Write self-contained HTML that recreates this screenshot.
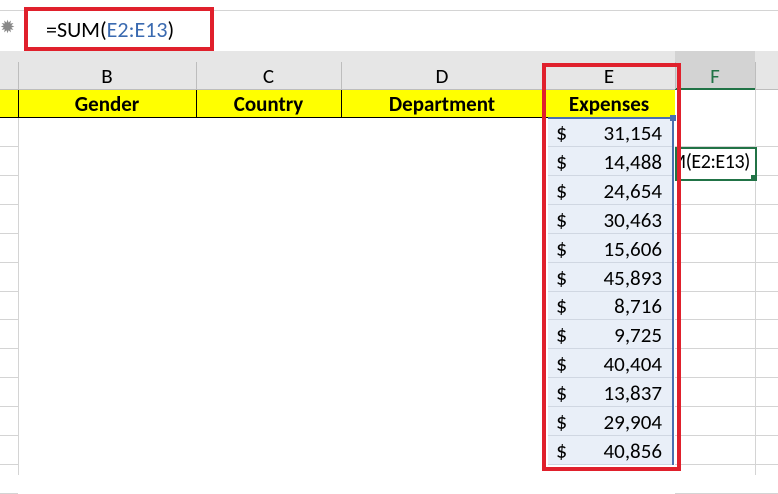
<!DOCTYPE html><html><head><style>
body{margin:0;width:778px;height:475px;overflow:hidden;background:#fff;font-family:Calibri,Carlito,"Liberation Sans",sans-serif;position:relative}
.a{position:absolute}
.t{font-size:20px;color:#000;line-height:22px}
</style></head><body>
<div class="a" style="left:0;top:0;width:778px;height:10px;border-bottom:1px solid #d4d4d4;background:#fff"></div>
<div class="a" style="left:0;top:16px;font-size:18px;color:#888">&#10041;</div>
<div class="a" style="left:0;top:51px;width:778px;height:38px;background:#e6e6e6;border-bottom:1px solid #bdbdbd"></div>
<div class="a" style="left:675px;top:51px;width:80px;height:37px;background:#d3d3d3;border-bottom:2px solid #217346"></div>
<div class="a" style="left:24px;top:7px;width:182px;height:36px;border:4px solid #e0202c;background:#fff"></div>
<div class="a t" style="left:46px;top:19px;font-size:22px">=SUM(<span style="color:#3a6ab0">E2:E13</span>)</div>
<div class="a" style="left:18px;top:62px;width:1px;height:27px;background:#bdbdbd"></div>
<div class="a" style="left:196px;top:62px;width:1px;height:27px;background:#bdbdbd"></div>
<div class="a" style="left:341px;top:62px;width:1px;height:27px;background:#bdbdbd"></div>
<div class="a" style="left:675px;top:62px;width:1px;height:27px;background:#bdbdbd"></div>
<div class="a" style="left:755px;top:62px;width:1px;height:27px;background:#bdbdbd"></div>
<div class="a t" style="left:18px;top:65px;width:178px;text-align:center;font-size:21px">B</div>
<div class="a t" style="left:196px;top:65px;width:145px;text-align:center;font-size:21px">C</div>
<div class="a t" style="left:341px;top:65px;width:202px;text-align:center;font-size:21px">D</div>
<div class="a t" style="left:543px;top:65px;width:132px;text-align:center;font-size:21px">E</div>
<div class="a t" style="left:675px;top:65px;width:80px;text-align:center;color:#217346;font-size:21px">F</div>
<div class="a" style="left:0;top:90px;width:675px;height:27px;background:#ffff00;border-bottom:1px solid #000"></div>
<div class="a" style="left:18px;top:90px;width:1px;height:28px;background:#000"></div>
<div class="a" style="left:196px;top:90px;width:1px;height:28px;background:#000"></div>
<div class="a" style="left:341px;top:90px;width:1px;height:28px;background:#000"></div>
<div class="a" style="left:543px;top:90px;width:1px;height:28px;background:#000"></div>
<div class="a t" style="left:18px;top:93px;width:178px;text-align:center;font-weight:bold;font-size:21px">Gender</div>
<div class="a t" style="left:196px;top:93px;width:145px;text-align:center;font-weight:bold;font-size:21px">Country</div>
<div class="a t" style="left:341px;top:93px;width:202px;text-align:center;font-weight:bold;font-size:21px">Department</div>
<div class="a t" style="left:543px;top:93px;width:132px;text-align:center;font-weight:bold;font-size:21px">Expenses</div>
<div class="a" style="left:18px;top:118px;width:1px;height:357px;background:#d4d4d4"></div>
<div class="a" style="left:755px;top:90px;width:1px;height:385px;background:#d4d4d4"></div>
<div id="g"></div>
<div class="a" style="left:548px;top:118px;width:125px;height:347px;background:#e9eff8"></div>
<div class="a" style="left:672px;top:118px;width:2px;height:347px;background:#4a6fb0"></div>
<div class="a" style="left:548px;top:117px;width:125px;height:2px;background:#4a6fb0"></div>
<div class="a" style="left:670px;top:115px;width:6px;height:6px;background:#4a6fb0"></div>
<script>
var v=["31,154","14,488","24,654","30,463","15,606","45,893","8,716","9,725","40,404","13,837","29,904","40,856"];var h="";
for(var i=0;i<13;i++){var y=118+i*28.9;
h+='<div class="a" style="left:0;top:'+(y+28)+'px;width:18px;height:1px;background:#d4d4d4"></div>';
h+='<div class="a" style="left:675px;top:'+(y+28)+'px;width:103px;height:1px;background:#d4d4d4"></div>';}
document.getElementById('g').innerHTML=h;h="";
for(var i=0;i<12;i++){var y=118+i*28.9;
h+='<div class="a" style="left:548px;top:'+(y+28)+'px;width:124px;height:1px;background:#d0d7e2"></div>';
h+='<div class="a t" style="left:556px;top:'+(y+4)+'px;font-size:22px">$</div>';
h+='<div class="a t" style="left:570px;top:'+(y+4)+'px;width:92px;text-align:right;font-size:21px">'+v[i]+'</div>';}
document.body.insertAdjacentHTML('beforeend',h);
</script>
<div class="a" style="left:675px;top:147px;width:78px;height:30px;border:2px solid #217346;background:#fff;overflow:hidden"></div>
<div class="a" style="left:677px;top:151px;width:75px;height:24px;overflow:hidden">
<div class="a t" style="left:-8px;top:0;font-size:20px;letter-spacing:-0.4px;white-space:nowrap">M(E2:E13)</div></div>
<div class="a" style="left:751px;top:175px;width:5px;height:5px;background:#217346"></div>
<div class="a" style="left:542px;top:63px;width:131px;height:400px;border:4px solid #e0202c"></div>
</body></html>
